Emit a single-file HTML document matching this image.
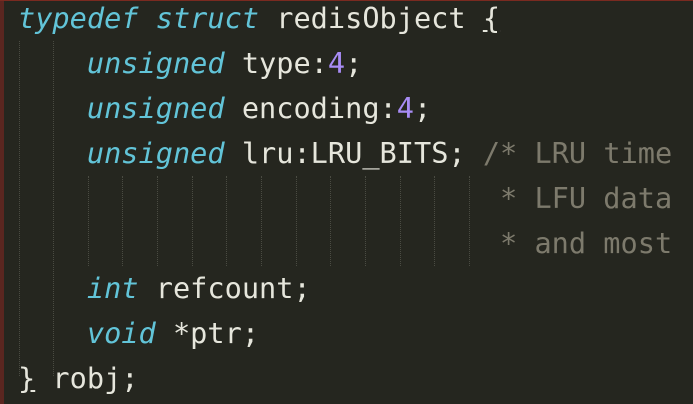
<!DOCTYPE html>
<html><head><meta charset="utf-8"><style>
html,body{margin:0;padding:0;}
body{width:693px;height:403px;overflow:hidden;background:#25261f;position:relative;border-top:1px solid #7a2a20;box-sizing:border-box;}
.l{position:absolute;left:0;top:0;width:4px;height:403px;background:#5a2620;}
pre{position:absolute;left:18px;top:-5px;margin:0;font-family:"DejaVu Sans Mono","Liberation Mono",monospace;font-size:28.6px;line-height:45px;color:#e6e6dc;letter-spacing:0;}
.k{color:#62c4d8;font-style:italic;}
.n{color:#a88cf5;}
.c{color:#7d7a6c;}
.g{position:absolute;width:0;border-left:1px dotted #4a4b42;}
</style></head><body>
<div class="l"></div>
<div class="g" style="left:19px;top:40px;height:335px"></div>
<div class="g" style="left:53px;top:40px;height:335px"></div>
<div class="g" style="left:88px;top:175px;height:90px"></div>
<div class="g" style="left:122px;top:175px;height:90px"></div>
<div class="g" style="left:157px;top:175px;height:90px"></div>
<div class="g" style="left:192px;top:175px;height:90px"></div>
<div class="g" style="left:226px;top:175px;height:90px"></div>
<div class="g" style="left:261px;top:175px;height:90px"></div>
<div class="g" style="left:296px;top:175px;height:90px"></div>
<div class="g" style="left:330px;top:175px;height:90px"></div>
<div class="g" style="left:365px;top:175px;height:90px"></div>
<div class="g" style="left:400px;top:175px;height:90px"></div>
<div class="g" style="left:434px;top:175px;height:90px"></div>
<div class="g" style="left:469px;top:175px;height:90px"></div>
<pre><span class="k">typedef</span> <span class="k">struct</span> redisObject <u>{</u>
    <span class="k">unsigned</span> type:<span class="n">4</span>;
    <span class="k">unsigned</span> encoding:<span class="n">4</span>;
    <span class="k">unsigned</span> lru:LRU_BITS; <span class="c">/* LRU time</span>
<span class="c">                            * LFU data</span>
<span class="c">                            * and most</span>
    <span class="k">int</span> refcount;
    <span class="k">void</span> *ptr;
<u>}</u> robj;</pre>
</body></html>
